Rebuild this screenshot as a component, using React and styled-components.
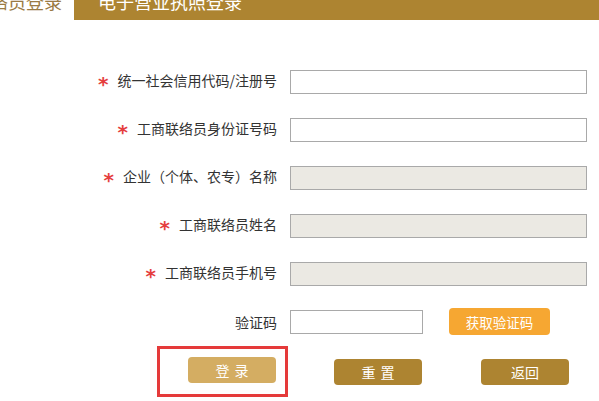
import styled, { createGlobalStyle } from "styled-components";

const GlobalStyle = createGlobalStyle`
  html, body {
    margin: 0;
    padding: 0;
    background: #fff;
    overflow: hidden;
  }
  body {
    font-family: "Noto Sans CJK SC", "Microsoft YaHei", sans-serif;
    color: #333;
  }
`;

const Page = styled.div`
  width: 599px;
  height: 401px;
  overflow: hidden;
`;

const TabBar = styled.div`
  display: flex;
  height: 40px;
  margin: -20px 0 0 -40px;
  overflow: hidden;
`;

const Tab = styled.div`
  height: 40px;
  line-height: 42px;
  font-size: 18px;
  white-space: nowrap;
  box-sizing: border-box;
  background: ${(p) => (p.$active ? "#ad8431" : "#fff")};
  color: ${(p) => (p.$active ? "#fff" : "#9a7a44")};
  flex: ${(p) => (p.$active ? "1" : "0 0 114px")};
  padding-left: ${(p) => (p.$active ? "24px" : "12px")};
`;

const Form = styled.div`
  padding-top: 48px;
`;

const Row = styled.div`
  display: grid;
  grid-template-columns: 277px auto;
  column-gap: 13px;
  align-items: center;
  height: 24px;
  margin-bottom: 24px;
`;

const Label = styled.label`
  text-align: right;
  font-size: 14px;
  line-height: 24px;
  white-space: nowrap;
`;

const Star = styled.span`
  color: #e53e3e;
  font-size: 20px;
  font-weight: bold;
  font-family: "DejaVu Sans", sans-serif;
  margin-right: 9px;
  vertical-align: -5px;
`;

const Field = styled.div`
  display: flex;
  align-items: center;
`;

const Input = styled.input`
  box-sizing: border-box;
  width: ${(p) => p.$w || 297}px;
  height: 24px;
  border: 1px solid #a9a9a9;
  background: ${(p) => (p.disabled ? "#ebe9e3" : "#fff")};
  padding: 0 4px;
  margin: 0;
  outline: none;
`;

const CodeButton = styled.button`
  box-sizing: border-box;
  width: 101px;
  height: 27px;
  margin-left: 26px;
  border: none;
  border-radius: 4px;
  background: #f6a732;
  color: #fff;
  font-family: inherit;
  font-size: 13.5px;
  padding: 0;
`;

const ButtonRow = styled.div`
  display: flex;
  align-items: center;
  margin-top: -10px;
  padding-left: 157px;
`;

const Highlight = styled.div`
  width: 131px;
  height: 51px;
  box-sizing: border-box;
  border: 3px solid #e53a3a;
  padding: 8px 0 0 28px;
`;

const ActionButton = styled.button`
  box-sizing: border-box;
  width: 88px;
  height: 26px;
  border: none;
  border-radius: 4px;
  background: ${(p) => (p.$light ? "#d4ad62" : "#ad8431")};
  color: #fff;
  font-family: inherit;
  font-size: 14px;
  padding: 0 0 0 ${(p) => (p.$spaced ? 5 : 0)}px;
  letter-spacing: ${(p) => (p.$spaced ? 5 : 0)}px;
  margin-left: ${(p) => p.$ml || 0}px;
  white-space: nowrap;
`;

const fields = [
  { label: "统一社会信用代码/注册号", disabled: false },
  { label: "工商联络员身份证号码", disabled: false },
  { label: "企业（个体、农专）名称", disabled: true },
  { label: "工商联络员姓名", disabled: true },
  { label: "工商联络员手机号", disabled: true },
];

const App = () => {
  return (
    <Page>
      <GlobalStyle />
      <TabBar>
        <Tab>联络员登录</Tab>
        <Tab $active>电子营业执照登录</Tab>
      </TabBar>
      <Form>
        {fields.map((f) => (
          <Row key={f.label}>
            <Label>
              <Star>*</Star>
              {f.label}
            </Label>
            <Input disabled={f.disabled} />
          </Row>
        ))}
        <Row>
          <Label>验证码</Label>
          <Field>
            <Input $w={133} />
            <CodeButton>获取验证码</CodeButton>
          </Field>
        </Row>
        <ButtonRow>
          <Highlight>
            <ActionButton $light $spaced>登录</ActionButton>
          </Highlight>
          <ActionButton $ml={46} $spaced>重置</ActionButton>
          <ActionButton $ml={59}>返回</ActionButton>
        </ButtonRow>
      </Form>
    </Page>
  );
};

export default App;
